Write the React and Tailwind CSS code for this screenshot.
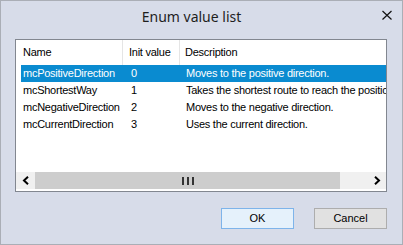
export default function App() {
  const rows = [
    ["mcPositiveDirection", "0", "Moves to the positive direction."],
    ["mcShortestWay", "1", "Takes the shortest route to reach the position."],
    ["mcNegativeDirection", "2", "Moves to the negative direction."],
    ["mcCurrentDirection", "3", "Uses the current direction."],
  ];
  const font = { fontFamily: '"Liberation Sans", Arial, sans-serif' };
  return (
    <div className="w-[403px] h-[245px] border border-[#aaaeb6] bg-[#d7dce9] flex flex-col text-black" style={font}>
      <div className="relative h-[38px] shrink-0 flex items-start justify-center pr-[20px]">
        <div className="mt-[5px] text-[14px] leading-[22px] text-[#1e1e1e]" style={{ fontFamily: '"Noto Sans", "Open Sans", sans-serif' }}>
          Enum value list
        </div>
        <svg className="absolute left-[380px] top-[9px]" width="12" height="11" viewBox="0 0 12 11">
          <path d="M1.5 1 L10.5 9.5 M10.5 1 L1.5 9.5" stroke="#111" strokeWidth="1.2" fill="none" />
        </svg>
      </div>
      <div className="ml-[14px] w-[372px] h-[153px] border border-[#828790] bg-white flex flex-col text-[11px] tracking-[-0.25px]">
        <div className="h-[25px] flex shrink-0">
          <div className="w-[107px] pl-[7px] border-r border-[#e5e5e5] flex items-center">Name</div>
          <div className="w-[57px] pl-[6px] border-r border-[#e5e5e5] flex items-center">Init value</div>
          <div className="flex-1 pl-[5px] flex items-center">Description</div>
        </div>
        <div className="flex-1 flex flex-col pl-[5px]">
          {rows.map((r, i) => (
            <div
              key={i}
              className={
                "h-[17px] flex items-center whitespace-nowrap overflow-hidden " +
                (i === 0 ? "bg-[#0a8bd0] text-white" : "")
              }
            >
              <div className="w-[108px] shrink-0 pl-[2px]">{r[0]}</div>
              <div className="w-[55px] shrink-0 pl-[2px]">{r[1]}</div>
              <div className="pl-[2px]">{r[2]}</div>
            </div>
          ))}
        </div>
        <div className="h-[17px] mb-[2px] flex shrink-0 bg-[#f0f0f0]">
          <div className="w-[19px] flex items-center justify-center">
            <svg width="8" height="9" viewBox="0 0 8 9">
              <path d="M6 0.8 L2 4.5 L6 8.2" stroke="#000" strokeWidth="2" fill="none" />
            </svg>
          </div>
          <div className="w-[305px] bg-[#cdcdcd] flex items-center justify-center gap-[1px]">
            <div className="w-[2px] h-[8px] bg-[#333]" />
            <div className="w-[1px]" />
            <div className="w-[2px] h-[8px] bg-[#333]" />
            <div className="w-[1px]" />
            <div className="w-[2px] h-[8px] bg-[#333]" />
          </div>
          <div className="w-[28px]" />
          <div className="flex-1 flex items-center justify-center">
            <svg width="8" height="9" viewBox="0 0 8 9">
              <path d="M2 0.8 L6 4.5 L2 8.2" stroke="#000" strokeWidth="2" fill="none" />
            </svg>
          </div>
        </div>
      </div>
      <div className="flex mt-[16px] ml-[220px] gap-[20px] text-[11px]">
        <div className="w-[73px] h-[21px] border border-[#7eb4ea] bg-[#e5f1fb] flex items-center justify-center">OK</div>
        <div className="w-[73px] h-[21px] border border-[#adadad] bg-[#e1e1e1] flex items-center justify-center">Cancel</div>
      </div>
    </div>
  );
}
